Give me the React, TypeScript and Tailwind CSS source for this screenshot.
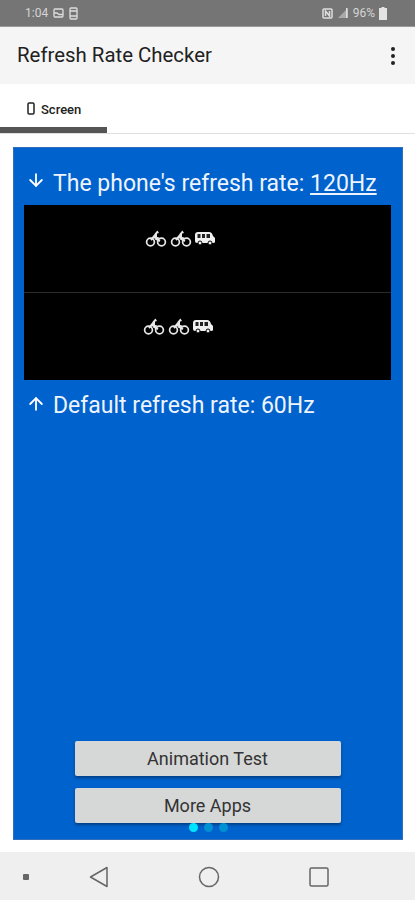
import { FC } from 'react'
import { ArrowDown, ArrowUp } from 'lucide-react'

const Bike: FC = () => (
  <svg width="22" height="19" viewBox="0 0 22 19" fill="none" stroke="#e8e8e8" strokeWidth="1.7">
    <circle cx="5.5" cy="13" r="3.9" />
    <circle cx="16.5" cy="13" r="3.9" />
    <path d="M6 11 L11 5 L11 10 L15 12 M8 8 L14 9.5" strokeWidth="2" />
    <path d="M9 5.5 L12.5 1.5 L14 4 Z" fill="#e8e8e8" stroke="none" />
  </svg>
)

const Van: FC = () => (
  <svg width="20" height="15" viewBox="0 0 20 15">
    <path d="M3 1 H14 Q17 1 18 5 L20 7 V11 Q20 12 18 12 H2 Q0 12 0 10 V4 Q0 1 3 1 Z" fill="#f0f0f0" />
    <rect x="2.5" y="3" width="3" height="4" fill="#222" />
    <rect x="7" y="3" width="3" height="4" fill="#222" />
    <rect x="11.5" y="3" width="3.5" height="4" fill="#222" />
    <circle cx="5" cy="12" r="2" fill="#f0f0f0" stroke="#000" />
    <circle cx="15" cy="12" r="2" fill="#f0f0f0" stroke="#000" />
  </svg>
)

const Vehicles: FC<{ className: string }> = ({ className }) => (
  <div className={`flex items-start ${className}`}>
    <div className="flex items-center gap-[3px]">
      <Bike />
      <Bike />
      <Van />
    </div>
  </div>
)

const App: FC = () => {
  return (
    <div className="flex h-[900px] w-[415px] flex-col overflow-hidden bg-white font-['Roboto',sans-serif]">
      {/* status bar */}
      <div className="flex h-[27px] items-center justify-between border-b border-[#999] bg-[#757575] pl-[25px] pr-[28px] text-[12px] text-[#d4d4d4]">
        <div className="flex items-center gap-[5px]">
          <span>1:04</span>
          <svg width="11" height="10" viewBox="0 0 11 10" fill="none" stroke="#ddd" strokeWidth="1.3">
            <rect x="1" y="1" width="9" height="8" rx="1" />
            <path d="M1 5 H4 L6 6.5 H10" />
          </svg>
          <svg width="9" height="13" viewBox="0 0 9 13" fill="none" stroke="#ddd" strokeWidth="1.3">
            <rect x="1" y="1" width="7" height="11" rx="1" />
            <path d="M1 4 H8 M1 9 H8" />
          </svg>
        </div>
        <div className="flex items-center gap-[4px]">
          <svg width="11" height="11" viewBox="0 0 11 11" fill="none" stroke="#ddd" strokeWidth="1.5">
            <rect x="1" y="1" width="9" height="9" rx="1" />
            <path d="M3.5 8 V3 L7.5 8 V3" />
          </svg>
          <svg width="12" height="12" viewBox="0 0 12 12">
            <path d="M11 1 V11 H1 Z" fill="#aaa" />
            <path d="M9 1 V11 H10.5 V1 Z" fill="#ddd" />
          </svg>
          <span>96%</span>
          <svg width="8" height="13" viewBox="0 0 8 13">
            <path d="M2.5 0 H5.5 V1 H8 V13 H0 V1 H2.5 Z" fill="#e4e4e4" />
          </svg>
        </div>
      </div>

      {/* app bar */}
      <div className="flex h-[57px] items-center justify-between bg-[#f5f5f5] pl-[17px] pr-[20px]">
        <span className="text-[20.4px] leading-none text-[#212121]">Refresh Rate Checker</span>
        <div className="flex flex-col gap-[3px]">
          <span className="size-[4px] rounded-full bg-[#222]" />
          <span className="size-[4px] rounded-full bg-[#222]" />
          <span className="size-[4px] rounded-full bg-[#222]" />
        </div>
      </div>

      {/* tabs */}
      <div className="mt-[3px] h-[47px] border-b border-[#e0e0e0]">
        <div className="flex h-[46px] w-[107px] flex-col justify-between">
          <div className="flex items-center gap-[6px] pl-[27px] pt-[16px]">
            <svg className="-mt-[3px]" width="8" height="13" viewBox="0 0 8 13" fill="none" stroke="#222" strokeWidth="1.5">
              <rect x="1" y="1" width="6" height="11" rx="1.2" />
            </svg>
            <span className="text-[13px] font-medium leading-none text-[#222]">Screen</span>
          </div>
          <div className="h-[6px] bg-[#555]" />
        </div>
      </div>

      {/* main card */}
      <div className="relative ml-[13px] mt-[13px] flex h-[693px] w-[390px] flex-col border border-[#2f6fbd] bg-[#0062cc] pl-[10px] pr-[11px] text-white">
        <div className="flex h-[57px] items-center pl-[2px] pt-[13px]">
          <ArrowDown className="-mt-[6px] size-[20px]" strokeWidth={2.2} />
          <span className="ml-[7px] text-[23px] leading-none text-[#eef4ff]">
            The phone's refresh rate: <span className="underline underline-offset-2">120Hz</span>
          </span>
        </div>
        <div className="divide-y divide-[#2b2b2b] bg-black">
          <Vehicles className="h-[88px] pl-[121px] pt-[24px]" />
          <Vehicles className="h-[87px] pl-[119px] pt-[24px]" />
        </div>
        <div className="flex h-[48px] items-center pl-[2px] pt-[3px]">
          <ArrowUp className="-mt-[4px] size-[20px]" strokeWidth={2.2} />
          <span className="ml-[7px] text-[23px] leading-none text-[#eef4ff]">Default refresh rate: 60Hz</span>
        </div>
        <div className="mb-[16px] mt-auto flex flex-col items-center gap-[12px]">
          <button className="h-[35px] w-[266px] rounded-[2px] bg-[#d6d7d7] text-[18px] text-[#333] shadow-[0_2px_3px_rgba(0,0,0,0.35)]">
            Animation Test
          </button>
          <button className="h-[35px] w-[266px] rounded-[2px] bg-[#d6d7d7] text-[18px] text-[#333] shadow-[0_2px_3px_rgba(0,0,0,0.35)]">
            More Apps
          </button>
        </div>
        <div className="absolute bottom-[7px] left-[175px] flex gap-[6px]">
          <span className="size-[9px] rounded-full bg-[#00e5ff]" />
          <span className="size-[9px] rounded-full bg-[#0091d5]" />
          <span className="size-[9px] rounded-full bg-[#0091d5]" />
        </div>
      </div>

      {/* nav bar */}
      <div className="mt-[12px] flex h-[48px] items-center bg-[#efefef] pl-[23px] pt-[2px]">
        <span className="size-[6px] rounded-[1px] bg-[#666]" />
        <svg className="ml-[60px]" width="20" height="22" viewBox="0 0 20 22" fill="none" stroke="#666" strokeWidth="1.5" strokeLinejoin="round">
          <path d="M18 1.5 V20.5 L1.5 11 Z" />
        </svg>
        <svg className="ml-[89px]" width="22" height="22" viewBox="0 0 22 22" fill="none" stroke="#666" strokeWidth="1.5">
          <circle cx="11" cy="11" r="9.5" />
        </svg>
        <svg className="ml-[88px]" width="22" height="22" viewBox="0 0 22 22" fill="none" stroke="#666" strokeWidth="1.5">
          <rect x="2" y="2" width="18" height="18" rx="1.5" />
        </svg>
      </div>
    </div>
  )
}

export default App
